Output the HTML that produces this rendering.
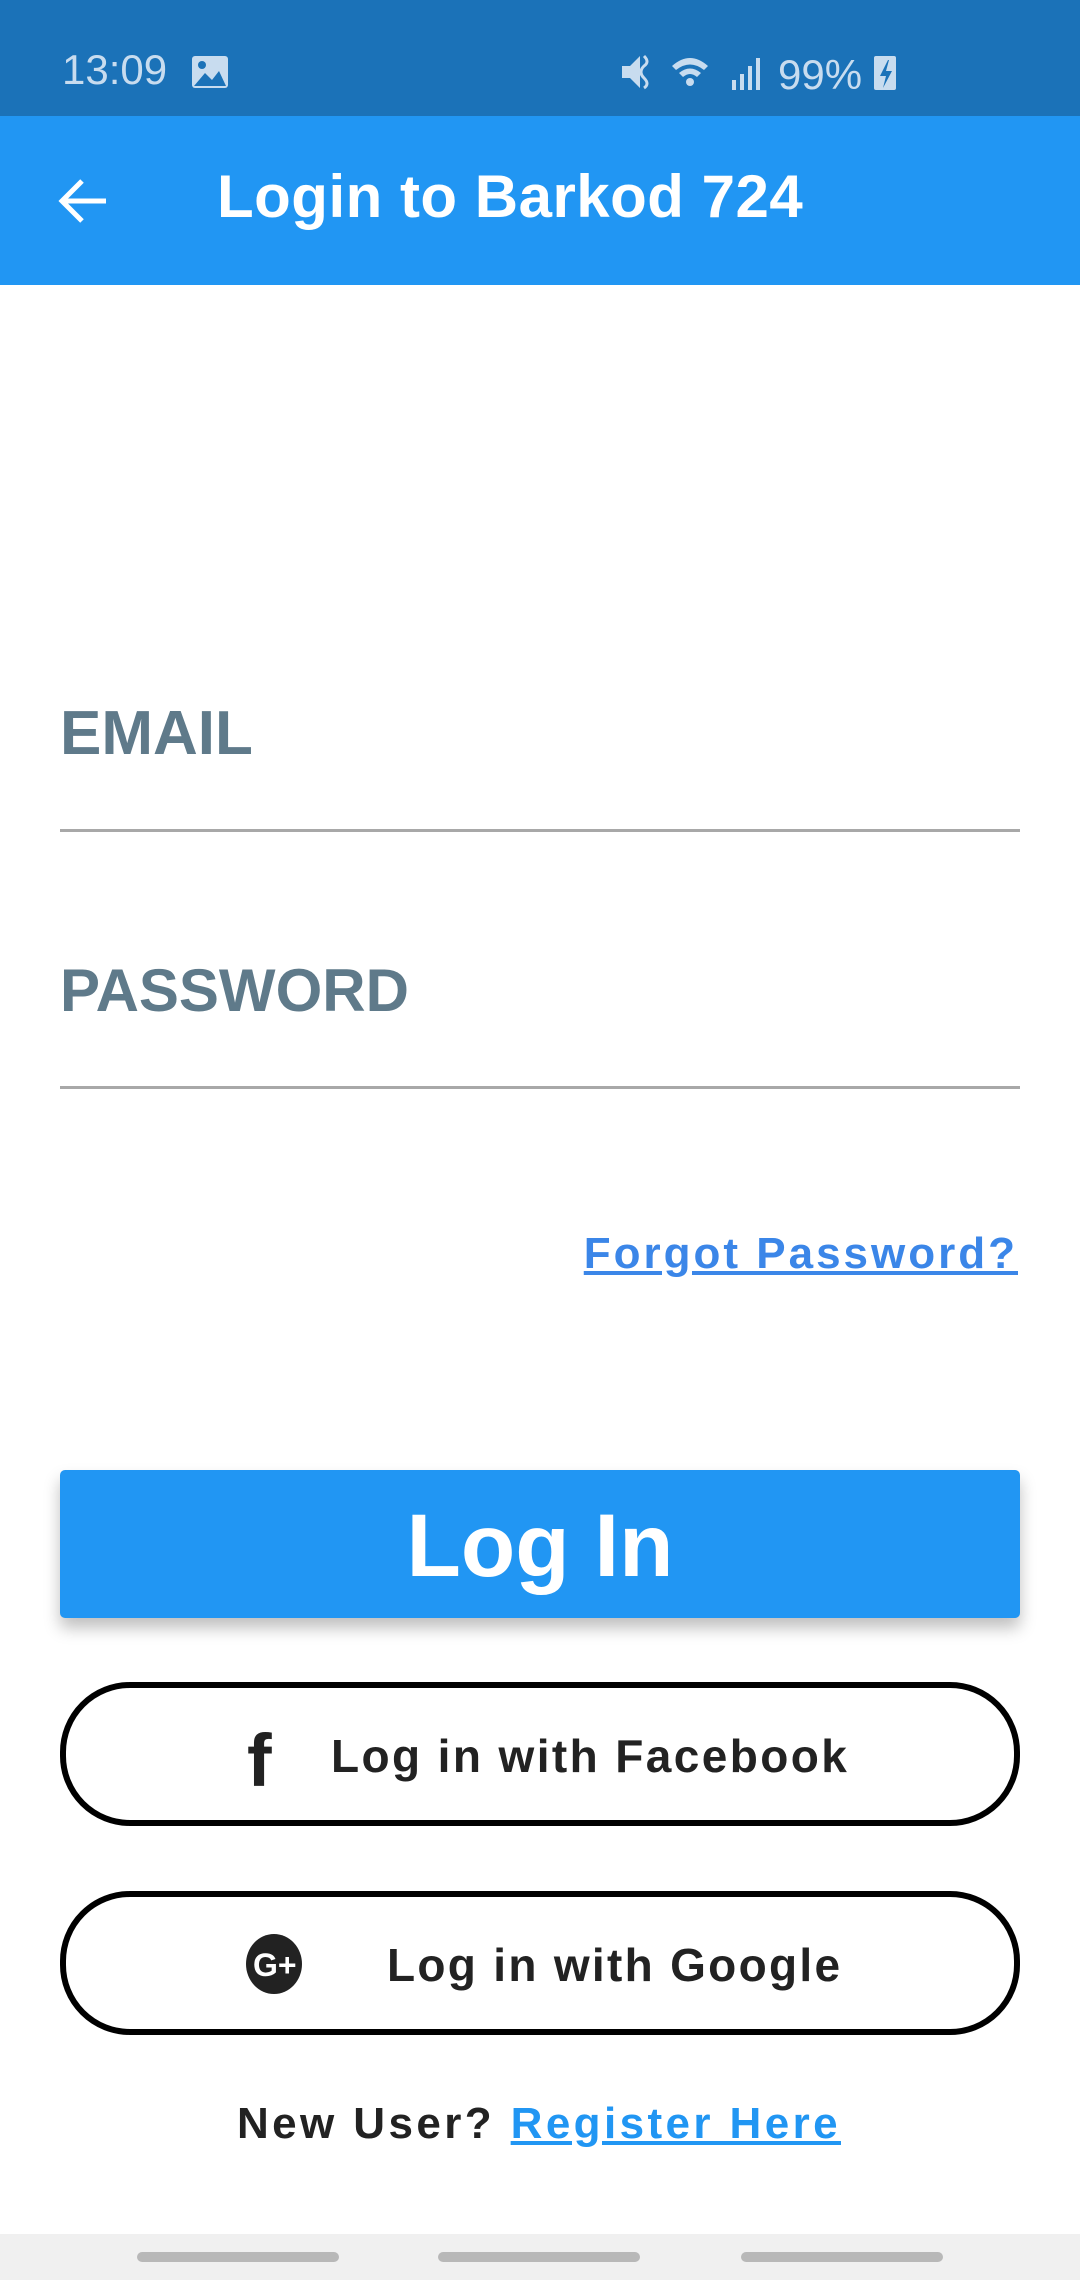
<!DOCTYPE html>
<html><head><meta charset="utf-8"><style>
*{margin:0;padding:0;box-sizing:border-box}
body{width:1080px;height:2280px;background:#fff;position:relative;overflow:hidden;font-family:"Liberation Sans",sans-serif}
.abs{position:absolute}
.sb{left:0;top:0;width:1080px;height:116px;background:#1b72b8}
.ab{left:0;top:116px;width:1080px;height:169px;background:#2196f3}
.lbl{left:60px;font-size:62px;font-weight:bold;color:#5f7a8a}
.line{left:60px;width:960px;height:3px;background:#a8a8a8}
.btn{left:60px;width:960px;height:144px;border:6px solid #000;border-radius:70px}
.bt{font-weight:bold;color:#222;font-size:46px;white-space:nowrap}
</style></head><body>
<div class="abs sb"></div>
<div class="abs" style="left:62px;top:46px;font-size:42px;color:#c8dcef">13:09</div>
<svg class="abs" style="left:192px;top:56px" width="36" height="32"><rect x="0" y="0" width="36" height="32" rx="3" fill="#c8dcef"/><circle cx="10" cy="9" r="4" fill="#1b72b8"/><path d="M2 30 L13 17 L20 24 L27 15 L34 30Z" fill="#1b72b8"/></svg>
<svg class="abs" style="left:620px;top:52px" width="290" height="40" fill="#c8dcef">
<path d="M2 14h8l10-10v32l-10-10H2z"/><path d="M24 4q6 6 0 10q-6 6 0 12q6 6 0 10" stroke="#c8dcef" stroke-width="3" fill="none"/>
<path d="M52 14q18-16 36 0l-4 4q-14-11-28 0z"/><path d="M59 21q11-9 22 0l-4 4q-7-6-14 0z"/><circle cx="70" cy="30" r="4"/>
<rect x="112" y="28" width="4" height="10"/><rect x="120" y="22" width="4" height="16"/><rect x="128" y="14" width="4" height="24"/><rect x="136" y="6" width="4" height="32"/>
<text x="158" y="37" font-size="42" font-family="Liberation Sans">99%</text>
<rect x="254" y="4" width="22" height="34" rx="2"/><path d="M268 8l-8 16h6l-3 12 9-17h-6l3-11z" fill="#1b72b8"/></svg>
<div class="abs ab"></div>
<svg class="abs" style="left:56px;top:178px" width="54" height="46"><path d="M50 23H6M26 3L6 23l20 20" stroke="#fff" stroke-width="5" fill="none"/></svg>
<div class="abs" style="left:217px;top:162px;font-size:60px;font-weight:bold;color:#fff;white-space:nowrap;letter-spacing:0.5px">Login to Barkod 724</div>
<div class="abs lbl" style="top:698px">EMAIL</div>
<div class="abs line" style="top:829px"></div>
<div class="abs lbl" style="top:956px;font-size:60px">PASSWORD</div>
<div class="abs line" style="top:1086px"></div>
<div class="abs" style="right:62px;top:1229px;font-size:44px;font-weight:bold;color:#3b86e8;text-decoration:underline;white-space:nowrap;letter-spacing:3px">Forgot Password?</div>
<div class="abs" style="left:60px;top:1470px;width:960px;height:148px;background:#2196f3;border-radius:5px;box-shadow:0 10px 16px rgba(0,0,0,.25);color:#fff;font-size:89px;font-weight:bold;text-align:center;line-height:150px">Log In</div>
<div class="abs btn" style="top:1682px"></div>
<div class="abs" style="left:247px;top:1718px;font-size:74px;font-weight:bold;color:#222;font-family:'Liberation Sans'">f</div>
<div class="abs bt" style="left:331px;top:1729px;letter-spacing:2.4px">Log in with Facebook</div>
<div class="abs btn" style="top:1891px"></div>
<svg class="abs" style="left:244px;top:1934px" width="60" height="60"><ellipse cx="30" cy="30" rx="28" ry="30" fill="#222"/><text x="9" y="42" font-size="32" font-weight="bold" fill="#fff" font-family="Liberation Sans">G+</text></svg>
<div class="abs bt" style="left:387px;top:1938px;letter-spacing:2.3px">Log in with Google</div>
<div class="abs bt" style="left:237px;top:2099px;font-size:44px;letter-spacing:3.4px">New User? <span style="color:#2196f3;text-decoration:underline">Register Here</span></div>
<div class="abs" style="left:0;top:2234px;width:1080px;height:46px;background:#f0f0f0"></div>
<div class="abs" style="left:137px;top:2252px;width:202px;height:10px;border-radius:5px;background:#b8b8b8"></div>
<div class="abs" style="left:438px;top:2252px;width:202px;height:10px;border-radius:5px;background:#b8b8b8"></div>
<div class="abs" style="left:741px;top:2252px;width:202px;height:10px;border-radius:5px;background:#b8b8b8"></div>
</body></html>
